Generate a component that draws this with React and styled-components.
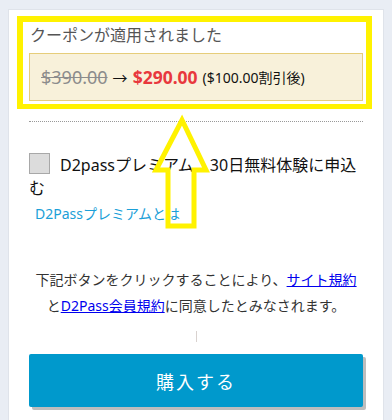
import React from 'react'
import styled, { createGlobalStyle } from 'styled-components'

const Global = createGlobalStyle`
  html, body {
    margin: 0;
    padding: 0;
    background: #e9edf4;
    font-family: "Noto Sans", "Noto Sans CJK JP", sans-serif;
  }
`

const Page = styled.div`
  position: relative;
  padding: 9px 8px 0 8px;
  height: 420px;
  overflow: hidden;
  box-sizing: border-box;
`

const Card = styled.div`
  background: #fff;
  border: 1px solid #dfe3ea;
  border-bottom: none;
  padding: 6px 20px 20px 20px;
  min-height: 420px;
`

const Highlight = styled.div`
  border: solid #fff200;
  border-width: 6px 6px 5px 6px;
  margin: 0 -9px 0 -12px;
  padding: 0 3px 3px 6px;
`

const Title = styled.div`
  font-size: 16px;
  color: #555;
  line-height: 26px;
  margin-bottom: 5px;
  margin-left: 1px;
`

const PriceBox = styled.div`
  background: #f8f1da;
  border: 1px solid #e6cd7a;
  height: 46px;
  display: flex;
  align-items: center;
  padding-left: 11px;
  gap: 5px;
`

const OldPrice = styled.span`
  color: #8c8c8c;
  font-size: 18px;
  text-decoration: line-through;
`

const Arrow = styled.span`
  font-size: 15px;
  color: #111;
`

const NewPrice = styled.span`
  color: #e8383d;
  font-size: 17.5px;
  font-weight: 700;
`

const Note = styled.span`
  font-size: 14px;
  color: #111;
`

const Dotted = styled.hr`
  border: none;
  border-top: 1px dotted #999;
  margin: 12px 0 0 0;
`

const CheckRow = styled.label`
  display: block;
  margin-top: 31px;
  font-size: 16px;
  line-height: 23px;
  color: #111;
`

const Box = styled.span`
  display: inline-block;
  width: 19px;
  height: 19px;
  background: #dcdcdc;
  border: 1px solid #a8a8a8;
  vertical-align: -3px;
  margin-right: 10px;
`

const InfoLink = styled.a`
  display: block;
  margin-top: 4px;
  padding-left: 6px;
  font-size: 14px;
  color: #1ba0d8;
  text-decoration: none;
  line-height: 20px;
`

const Terms = styled.p`
  margin: 43px 0 0 0;
  text-align: center;
  font-size: 14px;
  line-height: 26px;
  color: #333;
`

const TermsLink = styled.a`
  color: #0000ee;
  text-decoration: underline;
`

const Pipe = styled.div`
  width: 1px;
  height: 11px;
  background: #d9d2cf;
  margin: 12px auto 0 auto;
`

const BuyButton = styled.button`
  display: block;
  width: 100%;
  height: 53px;
  margin-top: 12px;
  background: #0099cc;
  border: none;
  border-radius: 2px;
  box-shadow: 3px 3px 0 #bdbdbd;
  color: #fff;
  font-family: "Noto Sans", "Noto Sans CJK JP", sans-serif;
  font-size: 18px;
  letter-spacing: 2px;
`

const Overlay = styled.svg`
  position: absolute;
  left: 0;
  top: 0;
  pointer-events: none;
`

const App = () => {
  return (
    <Page>
      <Global />
      <Card>
        <Highlight>
          <Title>クーポンが適用されました</Title>
          <PriceBox>
            <OldPrice>$390.00</OldPrice>
            <Arrow>→</Arrow>
            <NewPrice>$290.00</NewPrice>
            <Note>($100.00割引後)</Note>
          </PriceBox>
        </Highlight>
        <Dotted />
        <CheckRow>
          <Box />
          D2passプレミアム　30日無料体験に申込む
        </CheckRow>
        <InfoLink href="#">D2Passプレミアムとは</InfoLink>
        <Terms>
          下記ボタンをクリックすることにより、<TermsLink href="#">サイト規約</TermsLink>
          <br />
          と<TermsLink href="#">D2Pass会員規約</TermsLink>に同意したとみなされます。
        </Terms>
        <Pipe />
        <BuyButton>購入する</BuyButton>
      </Card>
      <Overlay width="392" height="420">
        <polygon
          points="182,120 206,170 194,170 194,226 168,226 168,170 156,170"
          fill="none"
          stroke="#fff200"
          strokeWidth="5"
          strokeLinejoin="miter"
        />
      </Overlay>
    </Page>
  )
}

export default App
